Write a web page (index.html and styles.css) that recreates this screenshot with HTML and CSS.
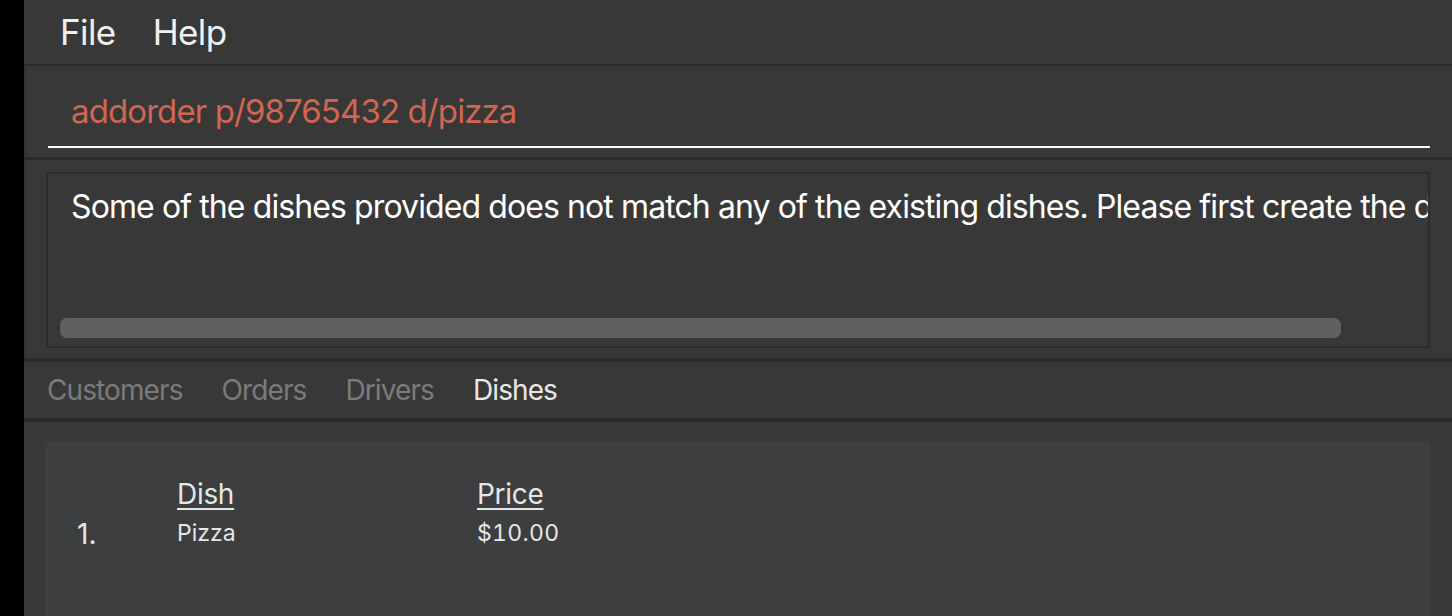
FILE: index.html
```html
<!DOCTYPE html>
<html lang="en">
<head>
<meta charset="utf-8">
<title>Order Manager</title>
<link rel="stylesheet" href="styles.css">
</head>
<body>
<div class="window">
  <div class="menubar">
    <span class="menu">File</span>
    <span class="menu">Help</span>
  </div>
  <div class="command">
    <div class="command-field">addorder p/98765432 d/pizza</div>
  </div>
  <div class="result">
    <div class="result-box">
      <div class="result-text">Some of the dishes provided does not match any of the existing dishes. Please first create the dishes before adding them to an order.</div>
      <div class="hscroll"><div class="thumb"></div></div>
    </div>
  </div>
  <div class="tabs">
    <span class="tab">Customers</span>
    <span class="tab">Orders</span>
    <span class="tab">Drivers</span>
    <span class="tab active">Dishes</span>
  </div>
  <div class="list">
    <div class="card">
      <span class="col-head head-dish">Dish</span>
      <span class="col-head head-price">Price</span>
      <span class="index">1.</span>
      <span class="value">Pizza</span>
      <span class="value price">$10.00</span>
    </div>
  </div>
</div>
</body>
</html>
```

FILE: styles.css
```css
html, body {
  margin: 0;
  padding: 0;
  height: 100%;
  background: #000000;
  overflow: hidden;
}

body {
  font-family: Inter, "Liberation Sans", sans-serif;
}

.window {
  margin-left: 24px;
  height: 616px;
  background: #383838;
  display: flex;
  flex-direction: column;
}

/* Menu bar */
.menubar {
  height: 64px;
  flex: none;
  box-sizing: border-box;
  padding: 10px 0 0 36px;
  display: flex;
  gap: 37px;
}

.menu {
  font-size: 35px;
  line-height: 44px;
  letter-spacing: -0.6px;
  color: #f0f0f0;
}

/* Command box */
.command {
  flex: none;
  border-top: 2px solid #2b2b2b;
  border-left: 2px solid #323232;
  height: 91px;
  box-sizing: content-box;
  padding: 0 22px 0 22px;
}

.command-field {
  margin-top: 14px;
  height: 68px;
  box-sizing: border-box;
  padding: 11px 0 0 23px;
  border-bottom: 2px solid #ffffff;
  font-size: 33px;
  line-height: 40px;
  letter-spacing: -0.9px;
  color: #d06651;
  white-space: nowrap;
}

/* Result display */
.result {
  flex: none;
  border-top: 3px solid #2b2b2b;
  border-left: 2px solid #323232;
  height: 201px;
  box-sizing: border-box;
  padding: 12px 22px 10px 20px;
}

.result-box {
  height: 100%;
  box-sizing: border-box;
  border: 2px solid #2d2d2d;
  overflow: hidden;
}

.result-text {
  padding: 13px 0 0 23px;
  font-size: 32px;
  line-height: 40px;
  letter-spacing: -0.9px;
  color: #ffffff;
  white-space: nowrap;
}

.hscroll {
  margin: 91px 0 0 12px;
}

.thumb {
  width: 1281px;
  height: 20px;
  border-radius: 7px;
  background: #606060;
}

/* Tabs */
.tabs {
  flex: none;
  border-top: 4px solid #2b2b2b;
  height: 60px;
  box-sizing: border-box;
  padding: 11px 0 0 23px;
  display: flex;
  gap: 39px;
}

.tab {
  font-size: 28px;
  line-height: 34px;
  letter-spacing: -0.9px;
  color: #7b7b7b;
}

.tab.active {
  color: #e8e8e8;
}

/* List */
.list {
  flex: 1;
  border-top: 4px solid #2b2b2b;
  padding: 20px 22px 0 21px;
  display: flex;
  flex-direction: column;
}

.card {
  flex: 1;
  background: #3c3e3f;
  display: grid;
  grid-template-columns: 100px 300px 300px;
  grid-template-rows: auto auto;
  align-content: start;
  row-gap: 8px;
  padding: 35px 0 0 32px;
  color: #e6e6e6;
}

.col-head {
  grid-row: 1;
  font-size: 28px;
  line-height: 34px;
  letter-spacing: -0.3px;
  text-decoration: underline;
  text-decoration-thickness: 2px;
  text-underline-offset: 4px;
  justify-self: start;
}

.col-head.head-dish {
  grid-column: 2;
}

.col-head.head-price {
  grid-column: 3;
}

.index {
  grid-row: 2;
  grid-column: 1;
  font-size: 28px;
  line-height: 28px;
  padding-top: 1px;
}

.value {
  grid-row: 2;
  font-size: 23px;
  line-height: 28px;
}

.value.price {
  font-variant-numeric: tabular-nums;
  letter-spacing: 0.3px;
}
```
